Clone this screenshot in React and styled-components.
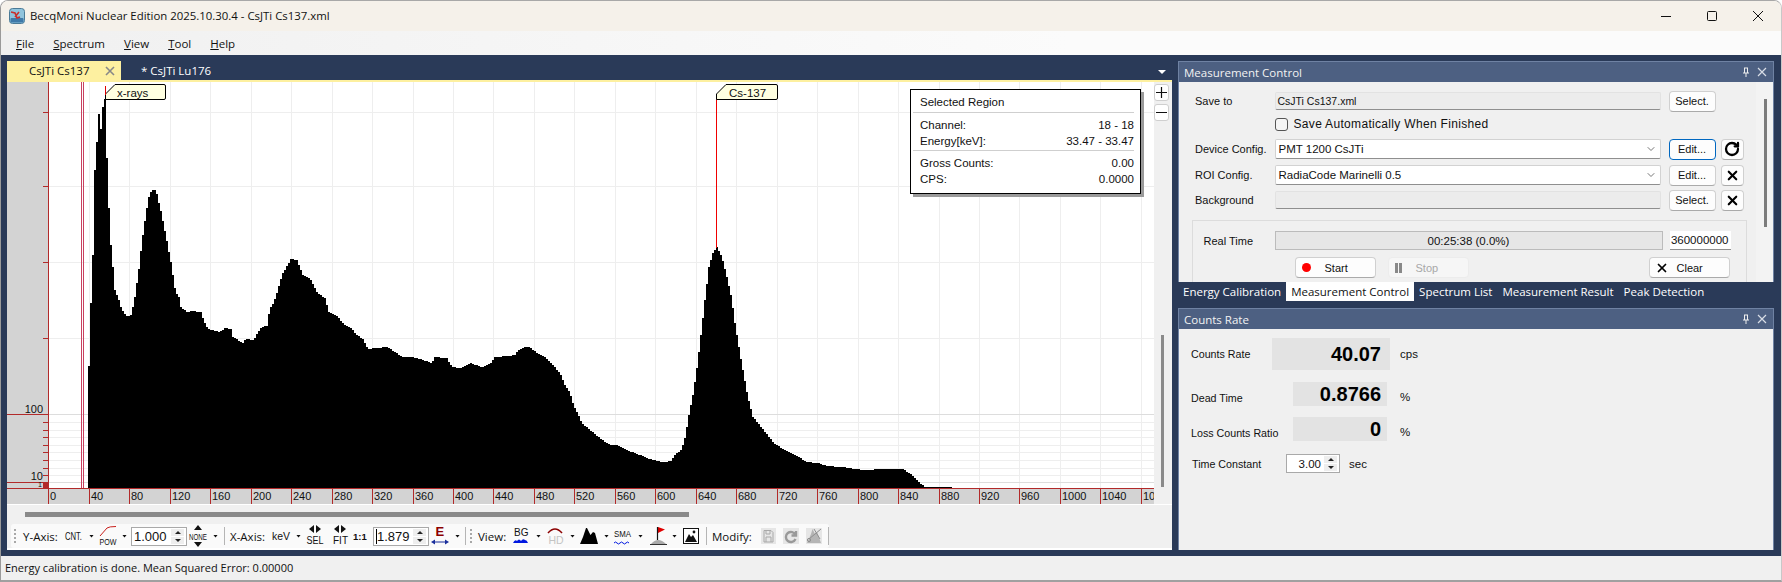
import React from 'react';
import styled, { createGlobalStyle } from 'styled-components';
import { ChevronDown, RotateCw, X } from 'lucide-react';

const UI_FONT = '"Open Sans", "Liberation Sans", sans-serif';
const FORM_FONT = '"Liberation Sans", Arial, sans-serif';
const AXIS_RED = '#b22a2a';

// spectrum outline, page coordinates
const PROFILE = [
  [88, 401], [90, 330], [92, 275], [94, 235], [95, 170], [97, 142], [99, 114], [101, 129], [103, 107], [105, 99],
  [107, 158], [109, 208], [111, 245], [113, 267], [115, 290], [119, 300], [122, 310], [127, 316], [131, 315],
  [133, 307], [135, 297], [137, 283], [139, 269], [142, 242], [144, 227], [146, 215], [148, 201], [150, 193],
  [153, 190], [156, 190], [158, 198], [160, 207], [162, 215], [164, 227], [166, 235], [168, 247], [170, 257],
  [172, 267], [174, 283], [176, 292], [179, 297], [181, 307], [187, 312], [193, 311], [201, 312], [203, 318],
  [207, 327], [211, 330], [220, 332], [225, 328], [231, 329], [233, 337], [238, 340], [243, 343], [246, 339],
  [254, 340], [258, 332], [262, 327], [267, 326], [270, 308], [274, 302], [278, 290], [282, 275], [286, 268],
  [291, 259], [297, 260], [303, 275], [310, 278], [317, 292], [325, 298], [329, 312], [337, 316], [345, 325],
  [351, 328], [357, 335], [363, 339], [368, 349], [377, 348], [388, 347], [395, 352], [403, 357], [412, 357],
  [423, 360], [432, 363], [435, 357], [447, 358], [452, 367], [460, 368], [470, 363], [482, 367], [492, 362],
  [495, 357], [507, 356], [515, 355], [518, 350], [525, 347], [530, 347], [537, 353], [545, 357], [552, 364],
  [560, 373], [565, 385], [570, 393], [573, 403], [577, 412], [582, 423], [590, 430], [600, 438], [610, 445],
  [618, 445], [627, 450], [643, 456], [650, 459], [663, 462], [671, 461], [675, 455], [682, 449], [685, 438],
  [689, 415], [693, 395], [697, 368], [701, 335], [705, 300], [709, 267], [713, 253], [717, 247], [722, 257],
  [727, 277], [732, 300], [735, 323], [739, 347], [743, 370], [748, 397], [753, 417], [758, 423], [765, 432],
  [775, 444], [785, 450], [797, 456], [807, 462], [818, 463], [827, 466], [843, 467], [863, 470], [883, 469],
  [903, 469], [912, 475], [920, 483], [925, 487], [951, 487],
];

const yAt = (x) => {
  for (let i = 1; i < PROFILE.length; i++) {
    if (x <= PROFILE[i][0]) {
      const [x0, y0] = PROFILE[i - 1];
      const [x1, y1] = PROFILE[i];
      return y0 + ((y1 - y0) * (x - x0)) / (x1 - x0);
    }
  }
  return 487;
};

const spectrumPath = () => {
  let d = 'M88 488';
  for (let x = 88; x < 951; x += 2) {
    d += ` V${Math.round(yAt(x + 1))} H${x + 2}`;
  }
  return `${d} V488 Z`;
};

const tickX = (value) => 48.4 + value * 1.0115;
const X_TICKS = Array.from({ length: 28 }, (_, i) => i * 40);
const MAJOR_Y = [112, 186, 262, 338];
const MINOR_Y = [422, 430, 437, 445, 452, 460, 468, 475];

const GlobalStyle = createGlobalStyle`
  html, body {
    margin: 0;
    width: 1782px;
    height: 582px;
    overflow: hidden;
    background: #fff;
  }
`;

const Window = styled.div`
  width: 1782px;
  height: 582px;
  box-sizing: border-box;
  display: flex;
  flex-direction: column;
  border-left: 1px solid #9a9a9a;
  border-right: 1px solid #c8c8c8;
  border-top: 1px solid #a8a8a8;
  border-bottom: 2px solid #a0a0a0;
  border-radius: 8px 8px 0 0;
  overflow: hidden;
  font-family: ${UI_FONT};
  color: #111;
`;

const TitleBar = styled.div`
  height: 30px;
  flex: none;
  display: flex;
  align-items: center;
  background: #f5f1ea;
  padding-left: 8px;
  font-size: 11.4px;
`;

const TitleText = styled.span`
  margin: 0 0 2px 5px;
  flex: 1;
`;

const WinButton = styled.div`
  width: 46px;
  height: 30px;
  display: flex;
  align-items: center;
  justify-content: center;
`;

const MenuBar = styled.div`
  height: 24px;
  flex: none;
  display: flex;
  align-items: center;
  gap: 19px;
  padding-left: 15px;
  background: linear-gradient(90deg, #f0f0f0, #fbfbfb 60%);
  font-size: 11.5px;
`;

const Dock = styled.div`
  height: 501px;
  flex: none;
  box-sizing: border-box;
  display: flex;
  gap: 6px;
  background: #2a3a58;
  padding: 6px;
`;

const LeftColumn = styled.div`
  width: 1165px;
  flex: none;
  display: flex;
  flex-direction: column;
  background: #fff;
`;

const RightColumn = styled.div`
  width: 596px;
  flex: none;
  display: flex;
  flex-direction: column;
`;

const DocTabs = styled.div`
  height: 19px;
  flex: none;
  display: flex;
  align-items: stretch;
  background: #2a3a58;
  border-bottom: 2px solid #fdf0a0;
  position: relative;
  font-size: 11.5px;
`;

const DocTab = styled.div`
  display: flex;
  align-items: center;
  box-sizing: border-box;
  width: ${(p) => p.$width}px;
  padding: 0 6px 0 ${(p) => (p.$active ? 22 : 20)}px;
  background: ${(p) => (p.$active ? '#fdf0a0' : 'transparent')};
  color: ${(p) => (p.$active ? '#111' : '#fff')};
  justify-content: space-between;
`;

const TabMenuArrow = styled.div`
  position: absolute;
  right: 6px;
  top: 9px;
  width: 0;
  height: 0;
  border-left: 4px solid transparent;
  border-right: 4px solid transparent;
  border-top: 4px solid #fff;
`;

const ChartRow = styled.div`
  height: 422px;
  flex: none;
  display: flex;
  position: relative;
`;

const ChartSvg = styled.svg`
  display: block;
  width: 1147px;
  height: 422px;
  flex: none;
`;

const ZoomStrip = styled.div`
  width: 18px;
  flex: none;
  box-sizing: border-box;
  padding-top: 2px;
  background: #f0f0f0;
  display: flex;
  flex-direction: column;
  align-items: center;
  gap: 3px;
  position: relative;
  padding-right: 3px;
`;

const ZoomButton = styled.div`
  width: 15px;
  height: 17px;
  box-sizing: border-box;
  border: 1px solid #cfcfcf;
  border-radius: 3px;
  background: #fff;
  display: flex;
  align-items: center;
  justify-content: center;
`;

const StripThumb = styled.div`
  position: absolute;
  left: 7px;
  top: 253px;
  width: 3px;
  height: 152px;
  background: #8a8a8a;
`;

const RegionBox = styled.div`
  position: absolute;
  left: 903px;
  top: 7px;
  width: 231px;
  height: 105px;
  box-sizing: border-box;
  padding: 0 6px 0 2px;
  background: #fff;
  border: 1.5px solid #000;
  box-shadow: 3px 3px 0 #9a9a9a;
  font-family: ${FORM_FONT};
  font-size: 11.5px;
  color: #111;
`;

const RegionTitle = styled.div`
  height: 22px;
  line-height: 25px;
  padding-left: 7px;
  border-bottom: 1px solid #cfcfcf;
`;

const RegionRow = styled.div`
  display: flex;
  justify-content: space-between;
  height: 16px;
  line-height: 16px;
  padding-left: 7px;
  margin-top: ${(p) => p.$mt || 0}px;
`;

const RegionRule = styled.div`
  border-top: 1px solid #cfcfcf;
  margin-top: 1px;
`;

const ScrollZone = styled.div`
  height: 20px;
  flex: none;
  box-sizing: border-box;
  background: #f0f0f0;
  border-top: 1px solid #fff;
  padding: 7px 0 0 18px;
`;

const ScrollThumb = styled.div`
  width: 664px;
  height: 5px;
  background: #8a8a8a;
`;

const ToolZone = styled.div`
  height: 24px;
  flex: none;
  display: flex;
  align-items: center;
  background: #f0f0f0;
  padding-left: 4px;
  border-bottom: 2px solid #fff;
`;

const ToolBand = styled.div`
  width: 818px;
  height: 24px;
  flex: none;
  display: flex;
  align-items: center;
  background: #fafafa;
  border-radius: 3px;
`;

const Grip = styled.div`
  width: 2px;
  height: 15px;
  flex: none;
  margin-left: ${(p) => p.$ml}px;
  background: repeating-linear-gradient(180deg, #a8a8a8 0 2px, transparent 2px 4px);
`;

const Sep = styled.div`
  width: 1px;
  height: 18px;
  flex: none;
  margin-left: ${(p) => p.$ml}px;
  background: #b5b5b5;
`;

const ToolText = styled.span`
  flex: none;
  width: ${(p) => p.$w}px;
  margin-left: ${(p) => p.$ml}px;
  font-size: 11.5px;
  white-space: nowrap;
`;

const Caret = styled.span`
  flex: none;
  margin-left: ${(p) => p.$ml}px;
  width: 5px;
  height: 3px;
  background: #111;
  clip-path: polygon(0 0, 100% 0, 50% 100%);
`;

const ToolIcon = styled.svg`
  flex: none;
  display: block;
  overflow: visible;
  width: ${(p) => p.$w}px;
  height: 22px;
  margin-left: ${(p) => p.$ml}px;
`;

const IconText = styled.text`
  font-family: ${FORM_FONT};
  font-size: ${(p) => p.$size || 9}px;
  font-weight: ${(p) => (p.$bold ? 700 : 400)};
  fill: ${(p) => p.$fill || '#111'};
`;

const Spin = styled.div`
  flex: none;
  width: ${(p) => p.$w}px;
  height: 19px;
  margin-left: ${(p) => p.$ml || 0}px;
  box-sizing: border-box;
  display: flex;
  align-items: center;
  justify-content: space-between;
  background: #fff;
  border: 1px solid #a9a9a9;
  padding: 0 2px;
  font-family: ${FORM_FONT};
  font-size: ${(p) => p.$size || 13}px;
`;

const SpinValue = styled.span`
  flex: 1;
  text-align: ${(p) => p.$align || 'left'};
  padding-right: ${(p) => (p.$align ? 3 : 0)}px;
  border-left: ${(p) => (p.$caret ? '1px solid #000' : 'none')};
`;

const SpinArrows = styled.div`
  width: 13px;
  display: flex;
  flex-direction: column;
  gap: 1px;
`;

const SpinArrow = styled.div`
  height: 7px;
  background: #eee;
  display: flex;
  align-items: center;
  justify-content: center;
  &::after {
    content: '';
    width: 0;
    height: 0;
    border-left: 3px solid transparent;
    border-right: 3px solid transparent;
    ${(p) => (p.$down ? 'border-top: 3px solid #222;' : 'border-bottom: 3px solid #222;')}
  }
`;

const Panel = styled.div`
  display: flex;
  flex-direction: column;
  border: 1px solid #6f82a3;
  border-bottom: none;
  background: #f0f0f0;
  ${(p) => (p.$grow ? 'flex: 1; margin-top: 7px;' : '')}
`;

const PanelHeader = styled.div`
  height: 20px;
  flex: none;
  display: flex;
  align-items: center;
  background: #4d6082;
  color: #f2f2f2;
  padding-left: 5px;
  font-size: 11.5px;
`;

const PanelTitle = styled.span`
  flex: 1;
`;

const HeaderIcon = styled.svg`
  width: 10px;
  height: 10px;
  margin-right: 6px;
  display: block;
`;

const MeasureBody = styled.div`
  height: 200px;
  box-sizing: border-box;
  overflow: hidden;
  padding-top: 8px;
  position: relative;
  font-family: ${FORM_FONT};
  font-size: 11.5px;
`;

const FormRow = styled.div`
  display: flex;
  align-items: center;
  height: 22px;
  padding-left: 16px;
  margin-top: ${(p) => p.$mt || 0}px;
`;

const FormLabel = styled.span`
  width: 79.5px;
  flex: none;
  font-size: 11px;
`;

const CheckLabel = styled.span`
  font-size: 12px;
  letter-spacing: 0.32px;
`;

const ReadOnlyField = styled.div`
  width: 386px;
  height: 18px;
  flex: none;
  box-sizing: border-box;
  display: flex;
  align-items: center;
  padding-left: 2px;
  background: #ececec;
  border: 1px solid #e2e2e2;
  border-bottom: 1px solid #8f8f8f;
  border-radius: 2px;
  font-size: 10.5px;
`;

const Combo = styled.div`
  width: 386px;
  height: 20px;
  flex: none;
  box-sizing: border-box;
  display: flex;
  align-items: center;
  justify-content: space-between;
  padding: 0 3px;
  background: #fff;
  border: 1px solid #d2d2d2;
  border-bottom: 1px solid #8f8f8f;
  border-radius: 2px;
`;

const PushButton = styled.div`
  width: 47px;
  height: 21px;
  flex: none;
  margin-left: 8px;
  box-sizing: border-box;
  display: flex;
  align-items: center;
  justify-content: center;
  background: #fdfdfd;
  border: 1px solid ${(p) => (p.$focus ? '#0067c0' : '#d0d0d0')};
  border-bottom-color: ${(p) => (p.$focus ? '#0067c0' : '#aaa')};
  border-radius: 4px;
  font-size: 11px;
`;

const IconButton = styled(PushButton)`
  width: 23px;
  margin-left: 5px;
`;

const CheckBox = styled.span`
  width: 13px;
  height: 13px;
  flex: none;
  box-sizing: border-box;
  margin: 0 6px 0 0;
  background: #f5f5f5;
  border: 1px solid #555;
  border-radius: 3px;
`;

const Group = styled.div`
  margin: 9px 0 0 12.5px;
  width: 555px;
  height: 90px;
  box-sizing: border-box;
  border: 1px solid #dcdcdc;
  padding-top: 10px;
`;

const GroupRow = styled.div`
  display: flex;
  align-items: center;
  height: ${(p) => p.$h}px;
  padding-left: ${(p) => p.$pl}px;
  margin-top: ${(p) => p.$mt || 0}px;
`;

const GroupLabel = styled.span`
  width: 71px;
  flex: none;
  font-size: 11px;
`;

const Progress = styled.div`
  width: 388px;
  height: 19px;
  flex: none;
  box-sizing: border-box;
  display: flex;
  align-items: center;
  justify-content: center;
  background: #e6e6e6;
  border: 1px solid #bbb;
`;

const TimeInput = styled.div`
  width: 61px;
  height: 19px;
  flex: none;
  margin-left: 7px;
  box-sizing: border-box;
  display: flex;
  align-items: center;
  justify-content: flex-end;
  padding-right: 2px;
  background: #fff;
  border-bottom: 1px solid #8f8f8f;
`;

const ActionButton = styled.div`
  width: 81px;
  height: 21px;
  flex: none;
  margin-left: ${(p) => p.$ml}px;
  box-sizing: border-box;
  display: flex;
  align-items: center;
  background: ${(p) => (p.$off ? '#f6f6f6' : '#fdfdfd')};
  color: ${(p) => (p.$off ? '#a8a8a8' : '#111')};
  border: 1px solid ${(p) => (p.$off ? '#ececec' : '#d0d0d0')};
  border-bottom-color: ${(p) => (p.$off ? '#ececec' : '#aaa')};
  border-radius: 4px;
  padding-left: 5px;
  gap: ${(p) => p.$gap}px;
  font-size: 11px;
`;

const RedDot = styled.span`
  width: 9px;
  height: 9px;
  margin-left: 1px;
  border-radius: 50%;
  background: #f00;
`;

const PauseBars = styled.span`
  width: 7px;
  height: 10px;
  margin-left: 1px;
  border-left: 3px solid #888;
  border-right: 3px solid #888;
  box-sizing: border-box;
`;

const ScrollTrack = styled.div`
  position: absolute;
  right: 0;
  top: 0;
  bottom: 0;
  width: 17px;
  background: #f3f3f3;
`;

const TrackThumb = styled.div`
  margin: 17px 0 0 8px;
  width: 3px;
  height: 128px;
  background: #7c7c7c;
`;

const DockTabs = styled.div`
  height: 19px;
  flex: none;
  display: flex;
  align-items: stretch;
  color: #fff;
  font-size: 11.5px;
`;

const DockTab = styled.div`
  display: flex;
  align-items: center;
  padding: 0 5px;
  background: ${(p) => (p.$active ? '#fff' : 'transparent')};
  color: ${(p) => (p.$active ? '#111' : '#fff')};
`;

const CountsBody = styled.div`
  flex: 1;
  box-sizing: border-box;
  padding: 9px 0 0 12px;
  font-family: ${FORM_FONT};
  font-size: 10.7px;
`;

const StatRow = styled.div`
  display: flex;
  align-items: center;
  height: ${(p) => p.$h}px;
  margin-top: ${(p) => p.$mt || 0}px;
`;

const StatLabel = styled.span`
  width: ${(p) => p.$w}px;
  flex: none;
  padding-top: ${(p) => p.$pt || 0}px;
  padding-left: ${(p) => p.$pl || 0}px;
  box-sizing: border-box;
`;

const StatValue = styled.div`
  width: ${(p) => p.$w}px;
  height: 100%;
  flex: none;
  box-sizing: border-box;
  display: flex;
  align-items: center;
  justify-content: flex-end;
  padding-right: ${(p) => p.$pr}px;
  background: #e3e3e3;
  font-size: 20px;
  font-weight: 700;
  color: #000;
`;

const StatUnit = styled.span`
  margin-left: ${(p) => p.$ml}px;
  padding-top: ${(p) => p.$pt || 0}px;
  font-size: 11.5px;
`;

const StatusBar = styled.div`
  flex: 1;
  display: flex;
  align-items: center;
  padding: 0 0 2px 4px;
  background: #f0f0f0;
  font-size: 11px;
`;

const Underlined = styled.u`
  text-underline-offset: 1px;
`;

const AppIcon = () => (
  <svg width="16" height="16" viewBox="0 0 16 16">
    <rect x="0.5" y="0.5" width="15" height="15" rx="3" fill="#8fc3dc" stroke="#4b7a96" />
    <rect x="1.5" y="10" width="13" height="4.5" rx="1" fill="#3f79a8" />
    <path d="M2 4 L6 5 L8 10 L11 9 M6 9 L10 4" stroke="#c9302c" strokeWidth="1.6" fill="none" />
  </svg>
);

const PinIcon = () => (
  <HeaderIcon viewBox="0 0 10 10">
    <path d="M3 1h4M3.5 1v5M6.5 1v5M2 6h6M5 6v4" stroke="#eee" strokeWidth="1" fill="none" />
  </HeaderIcon>
);

const CloseIcon = () => (
  <HeaderIcon viewBox="0 0 10 10">
    <path d="M1 1l8 8M9 1l-8 8" stroke="#d8dde6" strokeWidth="1.2" />
  </HeaderIcon>
);

const ArrowPair = () => <path d="M8 0v8L3 4zM10 0v8l5-4z" fill="#111" />;

const Spectrum = () => (
  <ChartSvg viewBox="7 82 1147 422">
    <rect x="7" y="82" width="1147" height="422" fill="#fff" />
    {X_TICKS.map((t) => (
      <rect key={t} x={Math.round(tickX(t))} y="82" width="1" height="406" fill="#eeeeee" />
    ))}
    {MAJOR_Y.map((y) => (
      <rect key={y} x="48" y={y} width="1106" height="1" fill="#eeeeee" />
    ))}
    <rect x="48" y="414" width="1106" height="1" fill="#dddddd" />
    {MINOR_Y.map((y) => (
      <rect key={y} x="48" y={y} width="1106" height="1" fill="#eeeeee" />
    ))}
    <rect x="48" y="482" width="1106" height="1" fill="#dddddd" />

    <rect x="7" y="82" width="41" height="406" fill="#d3d3d3" />
    <rect x="7" y="488" width="1147" height="16" fill="#d3d3d3" />
    <rect x="48" y="82" width="1" height="406" fill={AXIS_RED} />
    <rect x="7" y="488" width="1147" height="1" fill={AXIS_RED} />
    <rect x="7" y="414" width="41" height="1" fill={AXIS_RED} />
    <rect x="7" y="482" width="41" height="1" fill={AXIS_RED} />
    <rect x="43" y="483" width="5" height="5" fill={AXIS_RED} />
    {[...MAJOR_Y, ...MINOR_Y].map((y) => (
      <rect key={y} x="43" y={y} width="5" height="1" fill={AXIS_RED} />
    ))}
    <IconText x="43" y="413" textAnchor="end" $size={11}>100</IconText>
    <IconText x="43" y="480" textAnchor="end" $size={11}>10</IconText>
    <IconText x="42" y="487" textAnchor="end" $size={7}>1</IconText>

    {X_TICKS.map((t) => (
      <g key={t}>
        <rect x={Math.round(tickX(t))} y="488" width="1" height="16" fill={AXIS_RED} />
        <IconText x={Math.round(tickX(t)) + 2} y="499.5" $size={11}>{t === 1080 ? '10' : t}</IconText>
      </g>
    ))}

    <rect x="81" y="82" width="1" height="406" fill="#c8405f" />
    <rect x="83" y="82" width="1" height="406" fill="#c8405f" />

    <path d={spectrumPath()} fill="#000" shapeRendering="crispEdges" />

    <path d="M105.5 99.5 V94 L115 84.5 H164 Q165.5 84.5 165.5 86 V98 Q165.5 99.5 164 99.5 Z" fill="#ffffe1" stroke="#000" />
    <rect x="105" y="86" width="1" height="9" fill="#e00000" />
    <IconText x="117" y="96.5" $size={11.5}>x-rays</IconText>

    <rect x="716" y="99" width="1" height="149" fill="#f00000" />
    <path d="M716.5 99.5 V94 L726 84.5 H776 Q777.5 84.5 777.5 86 V98 Q777.5 99.5 776 99.5 Z" fill="#ffffe1" stroke="#000" />
    <IconText x="729" y="96.5" $size={11.5}>Cs-137</IconText>
  </ChartSvg>
);

const Toolbar = () => (
  <ToolZone>
    <ToolBand>
      <Grip $ml={3} />
      <ToolText $ml={7} $w={36}>Y-Axis:</ToolText>
      <ToolIcon $ml={6} $w={18} viewBox="0 0 18 22">
        <IconText x="0" y="15" $size={10.5} textLength="17" lengthAdjust="spacingAndGlyphs">CNT.</IconText>
      </ToolIcon>
      <Caret $ml={6} />
      <ToolIcon $ml={5} $w={18} viewBox="0 0 18 22">
        <path d="M1 11 L8 3 Q10 1.5 17 1.5" stroke="#c8201c" fill="none" />
        <IconText x="0.5" y="20" $size={9} textLength="17" lengthAdjust="spacingAndGlyphs">POW</IconText>
      </ToolIcon>
      <Caret $ml={5} />
      <Spin $ml={4} $w={56}>
        <SpinValue>1.000</SpinValue>
        <SpinArrows><SpinArrow /><SpinArrow $down /></SpinArrows>
      </Spin>
      <ToolIcon $ml={2} $w={18} viewBox="0 0 18 22">
        <path d="M5 5 L9 0 L13 5 Z M5 17 L13 17 L9 22 Z" fill="#111" />
        <IconText x="0" y="14.5" $size={8.5} textLength="18" lengthAdjust="spacingAndGlyphs">NONE</IconText>
      </ToolIcon>
      <Caret $ml={6} />
      <Sep $ml={6} />
      <ToolText $ml={5} $w={37}>X-Axis:</ToolText>
      <ToolIcon $ml={5} $w={18} viewBox="0 0 18 22">
        <IconText x="0" y="15" $size={10.5} textLength="18" lengthAdjust="spacingAndGlyphs">keV</IconText>
      </ToolIcon>
      <Caret $ml={6} />
      <ToolIcon $ml={5} $w={18} viewBox="0 0 18 22">
        <ArrowPair />
        <IconText x="0.5" y="19" $size={10} textLength="17" lengthAdjust="spacingAndGlyphs">SEL</IconText>
      </ToolIcon>
      <ToolIcon $ml={7} $w={18} viewBox="0 0 18 22">
        <ArrowPair />
        <IconText x="2" y="19" $size={10}>FIT</IconText>
      </ToolIcon>
      <ToolIcon $ml={4} $w={14} viewBox="0 0 14 22">
        <IconText x="0" y="14.5" $size={9.5} $bold>1:1</IconText>
      </ToolIcon>
      <Spin $ml={6} $w={56}>
        <SpinValue $caret>1.879</SpinValue>
        <SpinArrows><SpinArrow /><SpinArrow $down /></SpinArrows>
      </Spin>
      <ToolIcon $ml={2} $w={18} viewBox="0 0 18 22">
        <IconText x="4.5" y="11" $size={13} $bold $fill="#8b0000">E</IconText>
        <path d="M0 17 L4 14.5 V16.4 H14 V14.5 L18 17 L14 19.5 V17.6 H4 V19.5 Z" fill="#1a2f9c" />
      </ToolIcon>
      <Caret $ml={6} />
      <Sep $ml={5} />
      <Grip $ml={4} />
      <ToolText $ml={6} $w={28}>View:</ToolText>
      <ToolIcon $ml={7} $w={15} viewBox="0 0 15 22">
        <IconText x="1" y="11" $size={10}>BG</IconText>
        <path d="M0 18 Q2 14 4 16 Q6 13 8 16 Q10 13 12 15 Q14 15 15 18 Z" fill="#0018e0" />
      </ToolIcon>
      <Caret $ml={8} />
      <ToolIcon $ml={6} $w={16} viewBox="0 0 16 22">
        <path d="M1 8 Q8 0 15 8" stroke="#8b0000" strokeWidth="1.6" fill="none" />
        <IconText x="1.5" y="19" $size={10.5} $fill="#c4c4c4">HD</IconText>
      </ToolIcon>
      <Caret $ml={7} />
      <ToolIcon $ml={5} $w={18} viewBox="0 0 18 22">
        <path d="M0 19 L3 12 L6 3 L7 3 L10.5 10 L13 7 L15 8 L18 19 Z" fill="#000" />
      </ToolIcon>
      <Caret $ml={6} />
      <ToolIcon $ml={5} $w={17} viewBox="0 0 17 22">
        <IconText x="0" y="12" $size={9} textLength="17" lengthAdjust="spacingAndGlyphs">SMA</IconText>
        <path d="M0 18 Q1.5 16 3 18 T6 18 T9 18 T12 18 T15 18" stroke="#0018e0" fill="none" />
      </ToolIcon>
      <Caret $ml={7} />
      <ToolIcon $ml={7} $w={17} viewBox="0 0 17 22">
        <path d="M8 2 L15 4.5 L8 8 Z" fill="#e00000" />
        <path d="M7.5 2 V15" stroke="#111" strokeWidth="1.2" />
        <path d="M1 19 Q8 11 16 19 Z" fill="#aaa" />
        <path d="M0 19.5 H17" stroke="#333" />
      </ToolIcon>
      <Caret $ml={5} />
      <ToolIcon $ml={6} $w={16} viewBox="0 0 16 22">
        <rect x="0.5" y="3.5" width="15" height="15" fill="#fff" stroke="#111" />
        <circle cx="11" cy="7" r="1.4" fill="#111" />
        <path d="M2 17 L6 9 L8 12 L10 10 L14 17 Z" fill="#111" />
      </ToolIcon>
      <Sep $ml={7} />
      <ToolText $ml={5} $w={40}>Modify:</ToolText>
      <ToolIcon $ml={9} $w={15} viewBox="0 0 15 22">
        <rect x="0" y="3" width="15" height="16" fill="#e6e6e6" />
        <path d="M3 5.5 H10 L12 7.5 V17 H3 Z M5 5.5 V9 H9 V5.5 M5 17 V12 H10 V17" stroke="#a8a8a8" fill="none" />
      </ToolIcon>
      <ToolIcon $ml={7} $w={16} viewBox="0 0 16 22">
        <rect x="0" y="3" width="16" height="16" fill="#e6e6e6" />
        <path d="M13 6 V10.5 H8.5 M12.5 10 A5 5 0 1 0 12.5 14" stroke="#999" strokeWidth="2.4" fill="none" />
      </ToolIcon>
      <ToolIcon $ml={7} $w={16} viewBox="0 0 16 22">
        <rect x="0" y="3" width="16" height="16" fill="#e6e6e6" />
        <path d="M1 18 L5 9 L6.5 4 L9 9 L11 7 L15 18 Z" fill="#b5b5b5" />
        <path d="M15 4 L3 14 M8 4 L14 14" stroke="#8f8f8f" />
        <circle cx="3" cy="15" r="1.6" fill="none" stroke="#8f8f8f" />
      </ToolIcon>
      <Sep $ml={6} />
    </ToolBand>
  </ToolZone>
);

const App = () => (
  <>
    <GlobalStyle />
    <Window>
      <TitleBar>
        <AppIcon />
        <TitleText>BecqMoni Nuclear Edition 2025.10.30.4 - CsJTi Cs137.xml</TitleText>
        <WinButton>
          <svg width="12" height="12"><path d="M1 6.5 H11" stroke="#111" /></svg>
        </WinButton>
        <WinButton>
          <svg width="12" height="12"><rect x="1.5" y="1.5" width="9" height="9" rx="1" fill="none" stroke="#111" /></svg>
        </WinButton>
        <WinButton>
          <svg width="12" height="12"><path d="M1 1 L11 11 M11 1 L1 11" stroke="#111" /></svg>
        </WinButton>
      </TitleBar>
      <MenuBar>
        <span><Underlined>F</Underlined>ile</span>
        <span><Underlined>S</Underlined>pectrum</span>
        <span><Underlined>V</Underlined>iew</span>
        <span><Underlined>T</Underlined>ool</span>
        <span><Underlined>H</Underlined>elp</span>
      </MenuBar>
      <Dock>
        <LeftColumn>
          <DocTabs>
            <DocTab $active $width={114}>
              CsJTi Cs137
              <svg width="10" height="10"><path d="M1 1 L9 9 M9 1 L1 9" stroke="#888" strokeWidth="1.6" /></svg>
            </DocTab>
            <DocTab $width={110}>* CsJTi Lu176</DocTab>
            <TabMenuArrow />
          </DocTabs>
          <ChartRow>
            <Spectrum />
            <ZoomStrip>
              <ZoomButton>
                <svg width="11" height="11"><path d="M0 5.5 H11 M5.5 0 V11" stroke="#111" strokeWidth="1.2" /></svg>
              </ZoomButton>
              <ZoomButton>
                <svg width="11" height="11"><path d="M0 5.5 H11" stroke="#111" strokeWidth="1.2" /></svg>
              </ZoomButton>
              <StripThumb />
            </ZoomStrip>
            <RegionBox>
              <RegionTitle>Selected Region</RegionTitle>
              <RegionRow $mt={4}><span>Channel:</span><span>18 - 18</span></RegionRow>
              <RegionRow><span>Energy[keV]:</span><span>33.47 - 33.47</span></RegionRow>
              <RegionRule />
              <RegionRow $mt={4}><span>Gross Counts:</span><span>0.00</span></RegionRow>
              <RegionRow><span>CPS:</span><span>0.0000</span></RegionRow>
            </RegionBox>
          </ChartRow>
          <ScrollZone><ScrollThumb /></ScrollZone>
          <Toolbar />
        </LeftColumn>
        <RightColumn>
          <Panel>
            <PanelHeader>
              <PanelTitle>Measurement Control</PanelTitle>
              <PinIcon />
              <CloseIcon />
            </PanelHeader>
            <MeasureBody>
              <ScrollTrack><TrackThumb /></ScrollTrack>
              <FormRow>
                <FormLabel>Save to</FormLabel>
                <ReadOnlyField>CsJTi Cs137.xml</ReadOnlyField>
                <PushButton>Select.</PushButton>
              </FormRow>
              <FormRow $mt={1}>
                <FormLabel />
                <CheckBox />
                <CheckLabel>Save Automatically When Finished</CheckLabel>
              </FormRow>
              <FormRow $mt={3}>
                <FormLabel>Device Config.</FormLabel>
                <Combo>PMT 1200 CsJTi<ChevronDown size={12} color="#777" /></Combo>
                <PushButton $focus>Edit...</PushButton>
                <IconButton><RotateCw size={16} strokeWidth={3.4} color="#000" /></IconButton>
              </FormRow>
              <FormRow $mt={4}>
                <FormLabel>ROI Config.</FormLabel>
                <Combo>RadiaCode Marinelli 0.5<ChevronDown size={12} color="#777" /></Combo>
                <PushButton>Edit...</PushButton>
                <IconButton><X size={15} strokeWidth={3.4} color="#000" /></IconButton>
              </FormRow>
              <FormRow $mt={3}>
                <FormLabel>Background</FormLabel>
                <ReadOnlyField />
                <PushButton>Select.</PushButton>
                <IconButton><X size={15} strokeWidth={3.4} color="#000" /></IconButton>
              </FormRow>
              <Group>
                <GroupRow $h={19} $pl={11}>
                  <GroupLabel>Real Time</GroupLabel>
                  <Progress>00:25:38 (0.0%)</Progress>
                  <TimeInput>360000000</TimeInput>
                </GroupRow>
                <GroupRow $h={21} $pl={0} $mt={7}>
                  <ActionButton $ml={102} $gap={14}><RedDot />Start</ActionButton>
                  <ActionButton $ml={12} $gap={14} $off><PauseBars />Stop</ActionButton>
                  <ActionButton $ml={180} $gap={8}><X size={14} strokeWidth={3} color="#000" />Clear</ActionButton>
                </GroupRow>
              </Group>
            </MeasureBody>
          </Panel>
          <DockTabs>
            <DockTab>Energy Calibration</DockTab>
            <DockTab $active>Measurement Control</DockTab>
            <DockTab>Spectrum List</DockTab>
            <DockTab>Measurement Result</DockTab>
            <DockTab>Peak Detection</DockTab>
          </DockTabs>
          <Panel $grow>
            <PanelHeader>
              <PanelTitle>Counts Rate</PanelTitle>
              <PinIcon />
              <CloseIcon />
            </PanelHeader>
            <CountsBody>
              <StatRow $h={32}>
                <StatLabel $w={81}>Counts Rate</StatLabel>
                <StatValue $w={118} $pr={9}>40.07</StatValue>
                <StatUnit $ml={10}>cps</StatUnit>
              </StatRow>
              <StatRow $h={24} $mt={12}>
                <StatLabel $w={102} $pt={8}>Dead Time</StatLabel>
                <StatValue $w={94} $pr={6}>0.8766</StatValue>
                <StatUnit $ml={13} $pt={6}>%</StatUnit>
              </StatRow>
              <StatRow $h={24} $mt={11}>
                <StatLabel $w={102} $pt={8}>Loss Counts Ratio</StatLabel>
                <StatValue $w={94} $pr={6}>0</StatValue>
                <StatUnit $ml={13} $pt={6}>%</StatUnit>
              </StatRow>
              <StatRow $h={19} $mt={13}>
                <StatLabel $w={95} $pl={1}>Time Constant</StatLabel>
                <Spin $w={54} $size={11.5}>
                  <SpinValue $align="right">3.00</SpinValue>
                  <SpinArrows><SpinArrow /><SpinArrow $down /></SpinArrows>
                </Spin>
                <StatUnit $ml={9}>sec</StatUnit>
              </StatRow>
            </CountsBody>
          </Panel>
        </RightColumn>
      </Dock>
      <StatusBar>Energy calibration is done. Mean Squared Error: 0.00000</StatusBar>
    </Window>
  </>
);

export default App;
